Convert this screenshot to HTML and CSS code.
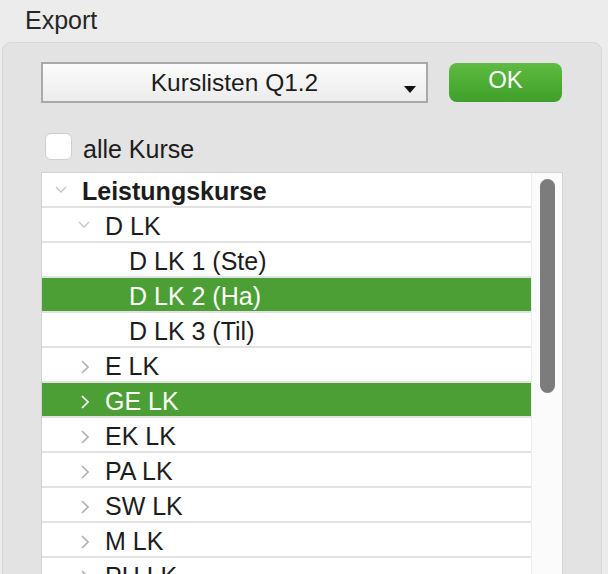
FILE: index.html
```html
<!DOCTYPE html>
<html lang="de">
<head>
  <meta charset="UTF-8" />
  <title>Export</title>
  <link rel="stylesheet" href="styles.css">
</head>
<body>
  <div class="title">Export</div>
  <div class="panel">
    <div class="toolbar">
      <div class="select">
        <span>Kurslisten Q1.2</span>
        <span class="caret"></span>
      </div>
      <button class="ok">OK</button>
    </div>

    <label class="check">
      <span class="box"></span>
      alle Kurse
    </label>

    <div class="tree">
      <div class="rows">
        <div class="row lvl0 open bold"><svg class="down" width="12" height="7" viewBox="0 0 12 7"><polyline points="1,1 6,6 11,1"/></svg>Leistungskurse</div>
        <div class="row lvl1 open"><svg class="down" width="12" height="7" viewBox="0 0 12 7"><polyline points="1,1 6,6 11,1"/></svg>D LK</div>
        <div class="row lvl2">D LK 1 (Ste)</div>
        <div class="row lvl2 selected">D LK 2 (Ha)</div>
        <div class="row lvl2">D LK 3 (Til)</div>
        <div class="row lvl1"><svg class="right" width="8" height="14" viewBox="0 0 8 14"><polyline points="1,1 7,7 1,13"/></svg>E LK</div>
        <div class="row lvl1 selected"><svg class="right" width="8" height="14" viewBox="0 0 8 14"><polyline points="1,1 7,7 1,13"/></svg>GE LK</div>
        <div class="row lvl1"><svg class="right" width="8" height="14" viewBox="0 0 8 14"><polyline points="1,1 7,7 1,13"/></svg>EK LK</div>
        <div class="row lvl1"><svg class="right" width="8" height="14" viewBox="0 0 8 14"><polyline points="1,1 7,7 1,13"/></svg>PA LK</div>
        <div class="row lvl1"><svg class="right" width="8" height="14" viewBox="0 0 8 14"><polyline points="1,1 7,7 1,13"/></svg>SW LK</div>
        <div class="row lvl1"><svg class="right" width="8" height="14" viewBox="0 0 8 14"><polyline points="1,1 7,7 1,13"/></svg>M LK</div>
        <div class="row lvl1"><svg class="right" width="8" height="14" viewBox="0 0 8 14"><polyline points="1,1 7,7 1,13"/></svg>PH LK</div>
      </div>
      <div class="scrollbar">
        <div class="thumb"></div>
      </div>
    </div>
  </div>
</body>
</html>
```

FILE: styles.css
```css
body {
  margin: 0;
  background: #ececec;
  font-family: 'Liberation Sans', Arial, sans-serif;
  color: #1c1c1c;
  height: 574px;
  overflow: hidden;
}
.title {
  font-size: 25px;
  line-height: 28px;
  padding: 6px 0 0 25px;
  color: #262626;
}
.panel {
  margin: 8px 6px 0 2px;
  background: #e3e3e3;
  border: 1px solid #d7d7d7;
  border-radius: 9px;
  padding: 19px 0 0 38px;
  height: 600px;
}
.toolbar {
  display: flex;
  gap: 21px;
  align-items: center;
}
.select {
  width: 383px;
  height: 37px;
  border: 2px solid #a9a9a9;
  background: linear-gradient(#fbfbfb, #ececec);
  display: flex;
  align-items: center;
  justify-content: center;
  font-size: 24.5px;
  position: relative;
}
.caret {
  position: absolute;
  right: 10px;
  bottom: 8px;
  border-left: 6px solid transparent;
  border-right: 6px solid transparent;
  border-top: 7px solid #111;
}
.ok {
  width: 113px;
  height: 39px;
  border: none;
  border-radius: 8px;
  background: linear-gradient(#5fbb41, #3f9f2a);
  color: white;
  font-family: inherit;
  font-size: 24px;
  padding: 0 0 5px;
}
.check {
  display: flex;
  align-items: center;
  gap: 11px;
  margin: 30px 0 0 4px;
  font-size: 25px;
}
.box {
  width: 25px;
  height: 25px;
  margin-bottom: 5px;
  background: white;
  border: 1px solid #cfcfcf;
  border-radius: 6px;
}
.tree {
  display: flex;
  width: 520px;
  margin-top: 7px;
  border: 1px solid #d2d2d2;
  background: white;
  height: 440px;
}
.rows {
  flex: 1;
}
.row {
  box-sizing: border-box;
  height: 35px;
  padding-top: 4px;
  border-bottom: 2px solid #e2e2e2;
  display: flex;
  align-items: center;
  font-size: 25px;
  white-space: nowrap;
}
.bold {
  font-weight: 700;
}
.lvl0 { padding-left: 13px; }
.lvl1 { padding-left: 39px; }
.lvl1.open { padding-left: 36px; }
.lvl2 { padding-left: 87px; }
svg polyline {
  fill: none;
  stroke: #b2b2b2;
  stroke-width: 1.7;
}
.down {
  margin: 0 15px 4px 0;
}
.down polyline {
  stroke: #c2c2c2;
  stroke-width: 1.3;
}
.right {
  margin-right: 16px;
}
.selected {
  background: #4c9f35;
  color: white;
}
.selected svg polyline {
  stroke: white;
}
.scrollbar {
  width: 30px;
  border-left: 1px solid #ececec;
  background: #fbfbfb;
}
.thumb {
  width: 15px;
  height: 214px;
  margin: 6px 0 0 8px;
  background: #7c7c7c;
  border-radius: 8px;
}
```
